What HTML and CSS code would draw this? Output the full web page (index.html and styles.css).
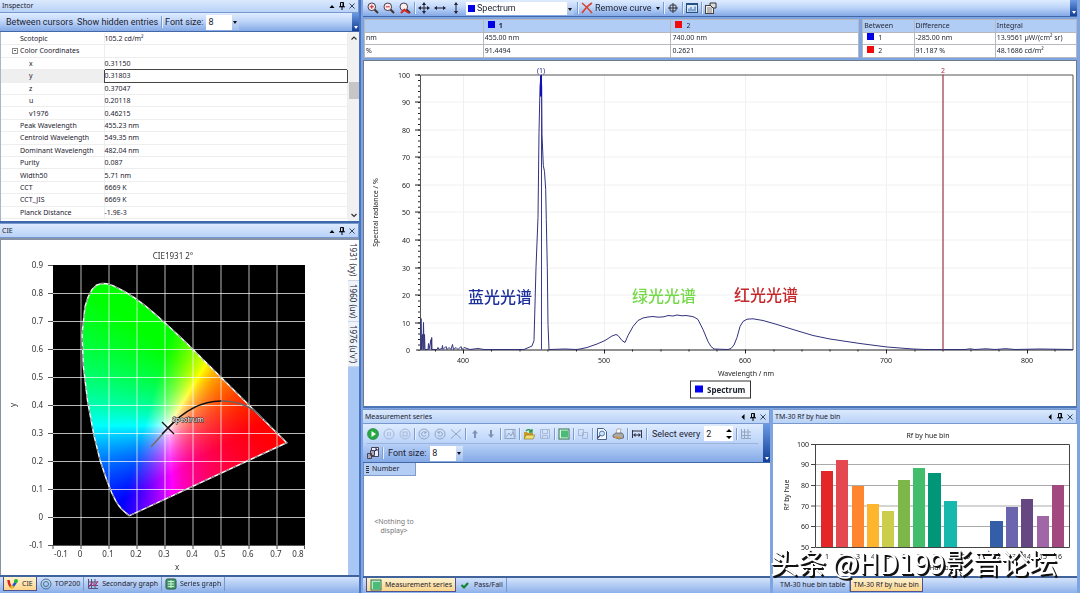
FILE: index.html
```html
<!DOCTYPE html>
<html lang="en">
<head>
<meta charset="utf-8">
<title>Spectrum analysis</title>
<link rel="stylesheet" href="styles.css">
</head>
<body>
<svg class="defs" aria-hidden="true">
  <symbol id="up" viewBox="0 0 10 10"><path d="M2.5 7h5L5 4z"/></symbol>
  <symbol id="left" viewBox="0 0 10 10"><path d="M6.5 2v6L3.5 5z"/></symbol>
  <symbol id="pin" viewBox="0 0 10 10"><path d="M3.5 1.5h3v4h-3zM2 5.800h6M5 6v3M6 1.500v4" fill="none" stroke="#000"/></symbol>
  <symbol id="close" viewBox="0 0 10 10"><path d="M2.500 2.500l5 5M7.500 2.500l-5 5" stroke="#234" stroke-width=".9"/></symbol>
  <symbol id="lens" viewBox="0 0 12 12"><path d="M7 7l4 4" stroke="#432" stroke-width="2"/><circle cx="4.800" cy="4.800" r="3.800" fill="#fbeeee" stroke="#443c4c"/></symbol>
  <symbol id="chartgrid" viewBox="0 0 12 12"><path d="M1.500 1v9.500H11M4.500 1v9M8 1v9M1 4h10M1 7.500h10" fill="none" stroke="currentColor"/></symbol>
</svg>
<div class="app">
  <aside class="side">
    <section class="panel inspector">
      <header class="title"><h2>Inspector</h2>
        <button aria-label="Menu"><svg><use href="#up"/></svg></button><button aria-label="Pin"><svg><use href="#pin"/></svg></button><button aria-label="Close"><svg><use href="#close"/></svg></button>
      </header>
      <div class="toolbar inspector-bar">
        <button>Between cursors</button><button>Show hidden entries</button><i class="sep"></i>
        <label for="fs1">Font size:</label>
        <span class="combo small"><select id="fs1"><option>8</option></select></span>
        <button class="more" aria-label="More"></button>
      </div>
      <div class="props">
        <table>
          <tr><td class="gut"></td><th>Scotopic</th><td>105.2 cd/m²</td></tr>
          <tr class="group"><td class="gut"><button class="fold" aria-label="Collapse"></button></td><th>Color Coordinates</th><td></td></tr>
          <tr class="sub"><td class="gut"></td><th>x</th><td>0.31150</td></tr>
          <tr class="sub picked"><td class="gut"></td><th>y</th><td>0.31803</td></tr>
          <tr class="sub"><td class="gut"></td><th>z</th><td>0.37047</td></tr>
          <tr class="sub"><td class="gut"></td><th>u</th><td>0.20118</td></tr>
          <tr class="sub"><td class="gut"></td><th>v1976</th><td>0.46215</td></tr>
          <tr><td class="gut"></td><th>Peak Wavelength</th><td>455.23 nm</td></tr>
          <tr><td class="gut"></td><th>Centroid Wavelength</th><td>549.35 nm</td></tr>
          <tr><td class="gut"></td><th>Dominant Wavelength</th><td>482.04 nm</td></tr>
          <tr><td class="gut"></td><th>Purity</th><td>0.087</td></tr>
          <tr><td class="gut"></td><th>Width50</th><td>5.71 nm</td></tr>
          <tr><td class="gut"></td><th>CCT</th><td>6669 K</td></tr>
          <tr><td class="gut"></td><th>CCT_JIS</th><td>6669 K</td></tr>
          <tr><td class="gut"></td><th>Planck Distance</th><td>-1.9E-3</td></tr>
        </table>
        <div class="scroll"><svg viewBox="0 0 10 10"><path d="M2.500 6.500L5 4l2.500 2.500"/></svg><i class="thumb"></i><svg viewBox="0 0 10 10"><path d="M2.500 4L5 6.500 7.500 4"/></svg></div>
      </div>
    </section>
    <section class="panel cie">
      <header class="title"><h2>CIE</h2>
        <button aria-label="Menu"><svg><use href="#up"/></svg></button><button aria-label="Pin"><svg><use href="#pin"/></svg></button><button aria-label="Close"><svg><use href="#close"/></svg></button>
      </header>
      <div class="cie-body">
        <svg class="plot" viewBox="0 240 347 335" role="img" aria-label="CIE 1931 chromaticity diagram">
          <rect x="52" y="265" width="252" height="281"/>
          <foreignObject x="52" y="265" width="252" height="280"><canvas id="gamut" width="252" height="280"></canvas></foreignObject>
          <path d="M80 265v280M108 265v280M136 265v280M164 265v280M192 265v280M220 265v280M248 265v280M276 265v280M52 293.500h252M52 321.500h252M52 349.500h252M52 377.500h252M52 405.500h252M52 433.500h252M52 461.500h252M52 489.500h252M52 517.500h252" stroke="#fff" stroke-opacity=".72" fill="none"/>
          <g transform="translate(52 265)"><path id="locus" fill="none" stroke="#fff" stroke-width="1.400"/><path id="locusDash" fill="none" stroke="#555" stroke-width=".8" stroke-dasharray="4 4"/></g>
          <path d="M47 265.500h5M47 293.500h5M47 321.500h5M47 349.500h5M47 377.500h5M47 405.500h5M47 433.500h5M47 461.500h5M47 489.500h5M47 517.500h5M47 545.500h257M52 545v4M80 545v4M108 545v4M136 545v4M164 545v4M192 545v4M220 545v4M248 545v4M276 545v4M303.500 545v4" stroke="#555" fill="none"/>
          <path d="M150 447L167 428" stroke="#776e66" stroke-width="1.500"/>
          <path d="M167 428Q192 401 220 401" stroke="#111" stroke-width="1.500" fill="none"/>
          <path d="M220 401Q247 401 262 419" stroke="#666" stroke-width="1.500" fill="none"/>
          <path d="M161 422l12 12M173 422l-12 12" stroke="#111" stroke-width="1.300"/>
          <text class="halo" x="171" y="422">Spectrum</text>
          <g class="tick end"><text x="42" y="268">0.9</text><text x="42" y="296">0.8</text><text x="42" y="324">0.7</text><text x="42" y="352">0.6</text><text x="42" y="380">0.5</text><text x="42" y="408">0.4</text><text x="42" y="436">0.3</text><text x="42" y="464">0.2</text><text x="42" y="492">0.1</text><text x="42" y="520">0</text><text x="42" y="548">-0.1</text></g>
          <g class="tick mid"><text x="60" y="557">-0.1</text><text x="79" y="557">0</text><text x="107" y="557">0.1</text><text x="135" y="557">0.2</text><text x="163" y="557">0.3</text><text x="191" y="557">0.4</text><text x="219" y="557">0.5</text><text x="247" y="557">0.6</text><text x="275" y="557">0.7</text><text x="297" y="557">0.8</text><text x="176" y="570">x</text><text x="172" y="259">CIE1931 2°</text><text transform="translate(15 405) rotate(-90)">y</text></g>
        </svg>
        <nav class="vtabs"><button class="on">1931 (xy)</button><button>1960 (uv)</button><button>1976 (u'v')</button></nav>
      </div>
    </section>
    <nav class="tabs side-tabs">
      <button class="on"><svg viewBox="0 0 12 12"><path d="M1.500 2Q2 8 5 9.500" stroke="#d22" stroke-width="2.500" fill="none"/><path d="M5 9.500L9 4" stroke="#25c" stroke-width="2.500"/><circle cx="9" cy="3" r="2" fill="#2b3"/><circle cx="5" cy="9" r="1.800" fill="#eb2"/></svg>CIE</button>
      <button><svg viewBox="0 0 12 12" fill="none" stroke="#47708f"><circle cx="6" cy="6" r="5"/><circle cx="6" cy="6" r="2.500"/></svg>TOP200</button>
      <button><svg viewBox="0 0 12 12" color="#557"><use href="#chartgrid"/><path d="M2 9l3-5 3 4 3-5" stroke="#c27" fill="none"/></svg>Secondary graph</button>
      <button><svg viewBox="0 0 12 12"><rect x="1" y="1" width="10" height="10" rx="1.500" fill="#4ca070" stroke="#254"/><path d="M3 3.500h6M3 6h6M3 8.500h6M6 2v8" stroke="#e4ffe8" stroke-width=".8"/></svg>Series graph</button>
    </nav>
  </aside>

  <main class="work">
    <div class="toolbar graph-bar">
      <button aria-label="Zoom in"><svg viewBox="0 0 12 12"><use href="#lens"/><path d="M2.800 4.800h4M4.800 2.800v4" stroke="#c22"/></svg></button>
      <button aria-label="Zoom out"><svg viewBox="0 0 12 12"><use href="#lens"/><path d="M2.800 4.800h4" stroke="#c22"/></svg></button>
      <button aria-label="Reset zoom"><svg viewBox="0 0 12 12"><use href="#lens"/><path d="M2 11l4-4M10 11L5 8" stroke="#d22" stroke-width="1.800"/></svg></button>
      <i class="sep"></i>
      <button aria-label="Pan"><svg viewBox="0 0 12 12"><path d="M6 1v10M1 6h10" stroke="#223"/><path d="M6 0l2 3H4zM6 12l2-3H4zM0 6l3-2v4zM12 6L9 4v4z" fill="#223"/></svg></button>
      <button aria-label="Pan horizontally"><svg viewBox="0 0 12 12"><path d="M1 6h10" stroke="#223"/><path d="M0 6l3-2v4zM12 6L9 4v4z" fill="#223"/></svg></button>
      <button aria-label="Pan vertically"><svg viewBox="0 0 12 12"><path d="M6 1v10" stroke="#223"/><path d="M6 0l2 3H4zM6 12l2-3H4z" fill="#223"/></svg></button>
      <span class="combo curve"><i class="sq blue"></i><select aria-label="Curve"><option>Spectrum</option></select></span>
      <i class="sep"></i>
      <button class="wide"><svg viewBox="0 0 12 12"><path d="M1 1q5 4 10 10M11 1Q6 4 1 11" stroke="#d8432f" stroke-width="1.600" fill="none"/></svg>Remove curve<b class="caret"></b></button>
      <i class="sep"></i>
      <button aria-label="Cursor"><svg viewBox="0 0 12 12" fill="none" stroke="#333"><path d="M6 1v10M1 6h10"/><rect x="3" y="3" width="6" height="6" rx="1"/></svg></button>
      <i class="sep"></i>
      <button aria-label="Graph view"><svg viewBox="0 0 12 12"><rect x=".5" y="1.500" width="11" height="9" fill="#dbe9f7" stroke="#25517c"/><path d="M1 2.500h10" stroke="#25517c"/><path d="M3 9.500V6.500M5 9.500V5M7 9.500V7M9 9.500V4.500" stroke="#2862b0"/></svg></button>
      <i class="sep"></i>
      <button aria-label="Properties"><svg viewBox="0 0 12 12"><rect x=".5" y="3.500" width="8" height="8" fill="#f4f1e7" stroke="#444"/><path d="M2 6h5M2 8h5M2 10h5" stroke="#667" stroke-width=".8"/><path d="M5 1h6v5H8L5 3z" fill="#ddd" stroke="#333"/></svg></button>
      <button class="more" aria-label="More"></button>
    </div>
    <div class="readouts">
      <table class="cursors">
        <tr><th></th><th class="bold"><i class="sq blue"></i>1</th><th><i class="sq red"></i>2</th></tr>
        <tr><td>nm</td><td>455.00 nm</td><td>740.00 nm</td></tr>
        <tr><td>%</td><td>91.4494</td><td>0.2621</td></tr>
      </table>
      <table class="between">
        <tr><th>Between</th><th>Difference</th><th>Integral</th></tr>
        <tr><td><i class="sq blue"></i>1</td><td>-285.00 nm</td><td>13.9561 µW/(cm² sr)</td></tr>
        <tr><td><i class="sq red"></i>2</td><td>91.187 %</td><td>48.1686 cd/m²</td></tr>
      </table>
    </div>
    <section class="graph">
      <svg class="plot" viewBox="364 62 712 344" role="img" aria-label="Spectral radiance graph">
        <path d="M463.500 75v275M604.500 75v275M745.500 75v275M886.500 75v275M1027.500 75v275M421 102.500h652M421 130.500h652M421 157.500h652M421 185.500h652M421 212.500h652M421 240.500h652M421 268.500h652M421 295.500h652M421 323.500h652" stroke="#f0f0f0"/>
        <path d="M420.500 350.500V75.500H1073V350.500" fill="none" stroke="#555"/>
        <path d="M416 350.500h657M415 75.500h5M415 102.500h5M415 130.500h5M415 157.500h5M415 185.500h5M415 212.500h5M415 240.500h5M415 268.500h5M415 295.500h5M415 323.500h5M463.500 350v4M604.500 350v4M745.500 350v4M886.500 350v4M1027.500 350v4M435.500 350v2M491.500 350v2M520 350v2M548 350v2M576.500 350v2M632.500 350v2M661 350v2M689 350v2M717 350v2M774 350v2M802 350v2M830 350v2M858 350v2M915 350v2M943 350v2M971 350v2M999 350v2M1055 350v2" stroke="#222" fill="none"/>
        <path d="M419 75V351" stroke="#222" stroke-width="2" stroke-dasharray="1 4.510"/>
        <path class="curve-line" d="M421 350V319L421.500 350 422.500 335 423 350 423.500 323 424 350 424.500 335 425 350H428L428.500 344 429 350 431 340 431.300 350 431.700 338 432 350H437L438 348 439 350 442 349 442.500 346 443 350 446 347 447 350 449 348 451 350 452.500 345 453.500 350 456 348 458 350 461 347 462 350 464 348 470 350 478 349 484 350H524L532 346.500 534 341 536 268 538 218 539 133 540 87 541 76 541.700 87 542 135 543.300 166 544.500 172 545.700 190 546.300 220 547.300 268 548 325 549 350 565 349.500 576 350 580 349.500 587 348 597 344.500 605 341 612 336.500 616 335 618 336 622 341 625 343 628 336 633 327 638 321 643 318.500 648 317.500 653 317 658 317.700 664 317.300 668 316 673 316.500 677 315.500 682 316.300 686 316 691 316.800 694 317.500 698 320 703 330 708 342 711 347 714 349.500 728 350 731 349 734 345.500 737 338 740 327 743 322 747 319.700 753 319.300 763 321 777 325 793 330 813 336 830 339.500 860 344 887 347.500 913 349.500 925 350H965L970 349.300 975 350 986 349.300 995 350 1006 349.200 1015 350 1040 349.500 1073 350"/>
        <path d="M541.500 75v275" stroke="#3a3a9c"/><path d="M541 76v21" stroke="#1010b8" stroke-width="2"/>
        <path d="M943 75v275" stroke="#a54250" stroke-width="1.300"/>
        <g class="axis end"><text x="410" y="78">100</text><text x="410" y="105">90</text><text x="410" y="133">80</text><text x="410" y="160">70</text><text x="410" y="188">60</text><text x="410" y="215">50</text><text x="410" y="243">40</text><text x="410" y="271">30</text><text x="410" y="298">20</text><text x="410" y="326">10</text><text x="410" y="353">0</text></g>
        <g class="axis mid"><text x="463" y="363">400</text><text x="604" y="363">500</text><text x="745" y="363">600</text><text x="886" y="363">700</text><text x="1027" y="363">800</text><text x="746" y="376">Wavelength / nm</text><text transform="translate(378 213) rotate(-90)">Spectral radiance / %</text><text class="mark1" x="541" y="73">(1)</text><text class="mark2" x="943" y="73">2</text></g>
        <g class="note"><text x="468" y="303">蓝光光谱</text><text x="632" y="302">绿光光谱</text><text x="734" y="301">红光光谱</text></g>
        <rect x="690.500" y="381.500" width="60" height="17" fill="#fff" stroke="#333"/><rect x="695" y="386" width="8" height="7" fill="#00e"/><text class="legend" x="707" y="393">Spectrum</text>
      </svg>
    </section>
    <div class="bottom">
      <section class="panel series">
        <header class="title"><h2>Measurement series</h2>
          <button aria-label="Menu"><svg><use href="#left"/></svg></button><button aria-label="Pin"><svg><use href="#pin"/></svg></button><button aria-label="Close"><svg><use href="#close"/></svg></button>
        </header>
        <div class="toolbar series-bar">
          <div class="row">
            <button aria-label="Start"><svg viewBox="0 0 12 12"><circle cx="6" cy="6" r="5.500" fill="#28a845" stroke="#188032" stroke-width=".6"/><path d="M4.500 3l4.500 3-4.500 3z" fill="#fff"/></svg></button>
            <button class="off" aria-label="Pause"><svg viewBox="0 0 12 12"><circle cx="6" cy="6" r="5"/><path d="M4.800 4v4M7.200 4v4"/></svg></button>
            <button class="off" aria-label="Stop"><svg viewBox="0 0 12 12"><circle cx="6" cy="6" r="5"/><rect x="4" y="4" width="4" height="4"/></svg></button>
            <i class="sep"></i>
            <button class="off dark" aria-label="Repeat"><svg viewBox="0 0 12 12"><circle cx="6" cy="6" r="5"/><path d="M8 5a2.300 2.300 0 1 0 0 2M8 3v2H6"/></svg></button>
            <button class="off dark" aria-label="Replace"><svg viewBox="0 0 12 12"><circle cx="6" cy="6" r="5"/><path d="M4 5a2.300 2.300 0 1 1 0 2M4 3v2h2"/></svg></button>
            <button class="off dark" aria-label="Delete"><svg viewBox="0 0 12 12"><path d="M1 1.500l10 9M11 1.500l-10 9"/></svg></button>
            <i class="sep"></i>
            <button class="off" aria-label="Move up"><svg viewBox="0 0 12 12"><path d="M6 2l3 3.500H7V10H5V5.500H3z" fill="#7d92b5" stroke="none"/></svg></button>
            <button class="off" aria-label="Move down"><svg viewBox="0 0 12 12"><path d="M6 10L3 6.500h2V2h2v4.500h2z" fill="#7d92b5" stroke="none"/></svg></button>
            <i class="sep"></i>
            <button class="off dark" aria-label="Picture"><svg viewBox="0 0 12 12"><rect x="1" y="1.500" width="10" height="9"/><path d="M2 9l3-4 2 3 2-4 1.500 5M8 3h2"/></svg></button>
            <i class="sep"></i>
            <button aria-label="Open"><svg viewBox="0 0 12 12"><path d="M1 4h3l1 1h5v6H1z" fill="#c99b28"/><path d="M3 7h9l-2 4H1z" fill="#f4df72" stroke="#7b681d" stroke-width=".6"/><path d="M3 3q3-3 6 1M9 1v3H6" stroke="#279536" fill="none" stroke-width="1.300"/></svg></button>
            <button class="off" aria-label="Save"><svg viewBox="0 0 12 12"><path d="M1.500 1.500h9v9h-9zM3.500 1.500v4h5v-4M3.500 10.500v-3h5v3"/></svg></button>
            <i class="sep"></i>
            <button aria-label="Series"><svg viewBox="0 0 12 12"><rect x="1" y="1" width="10" height="10" fill="#e1f4e6" stroke="#31724c"/><rect x="3" y="2.500" width="7" height="7" fill="#49bd76"/></svg></button>
            <i class="sep"></i>
            <button class="off" aria-label="Copy"><svg viewBox="0 0 12 12"><path d="M1.500 1.500h5v6h-5zM5.500 4.500h5v6h-5z"/></svg></button>
            <i class="sep"></i>
            <button aria-label="Preview"><svg viewBox="0 0 12 12"><path d="M1.500.5h6l3 3v8h-9z" fill="#f5f9ff" stroke="#46618a"/><circle cx="6" cy="5.500" r="2.500" fill="#cbe4fa" stroke="#4a76b6"/><path d="M4 7.500L1.500 10" stroke="#446" stroke-width="1.500"/></svg></button>
            <button aria-label="Print"><svg viewBox="0 0 12 12"><path d="M4 6l1-5h4L8 6z" fill="#fff" stroke="#888" stroke-width=".6"/><path d="M1 7l3-2h6l1.500 2v3L7 11 1 9z" fill="#aaa" stroke="#555" stroke-width=".7"/><path d="M3 9l5 1" stroke="#d59432" stroke-width="1.500"/></svg></button>
            <i class="sep"></i>
            <button aria-label="Fit width"><svg viewBox="0 0 12 12"><path d="M1.500 2v8M10.500 2v8M1 3h10M3 7h6" stroke="#334" fill="none"/><path d="M4.500 5L2 7l2.500 2zM7.500 5L10 7 7.500 9z" fill="#334"/></svg></button>
            <i class="sep"></i>
            <label class="every" for="every">Select every</label>
            <span class="spin"><input id="every" type="number" value="2"><svg viewBox="0 0 8 16"><path d="M1 6h6L4 3zM1 10h6l-3 3z"/></svg></span>
            <i class="sep"></i>
            <button class="off" aria-label="Grid"><svg viewBox="0 0 12 12" color="#93a5bf"><use href="#chartgrid"/></svg></button>
          </div>
          <div class="row second">
            <button aria-label="Layout"><svg viewBox="0 0 12 12"><path d="M4.500.5h7v9h-7z" fill="#eef" stroke="#445"/><path d="M.5 6.500h4v5h-4zM3.500 3.500h4v5h-4z" fill="#aab" stroke="#445"/><path d="M7 5l3-3M10 2v2M10 2H8" stroke="#225"/></svg></button>
            <i class="sep"></i>
            <label class="every" for="fs2">Font size:</label>
            <span class="combo small"><select id="fs2"><option>8</option></select></span>
          </div>
          <button class="more" aria-label="More"></button>
        </div>
        <div class="series-body">
          <div class="colhead"><i class="grip"></i><span>Number</span></div>
          <p class="empty">&lt;Nothing to display&gt;</p>
        </div>
        <nav class="tabs">
          <button class="on"><svg viewBox="0 0 12 12"><rect x="1" y="1" width="10" height="10" fill="#b9e6c8" stroke="#31724c"/><rect x="3" y="3" width="7" height="7" fill="#49bd76"/></svg>Measurement series</button>
          <button><svg viewBox="0 0 12 12"><path d="M2.500 6l2.500 2.500L9 4" stroke="#16842f" stroke-width="2.200" fill="none"/></svg>Pass/Fail</button>
        </nav>
      </section>
      <section class="panel tm">
        <header class="title"><h2>TM-30 Rf by hue bin</h2>
          <button aria-label="Menu"><svg><use href="#left"/></svg></button><button aria-label="Pin"><svg><use href="#pin"/></svg></button><button aria-label="Close"><svg><use href="#close"/></svg></button>
        </header>
        <div class="tm-body">
          <svg class="plot" viewBox="773 423 304 152" role="img" aria-label="TM-30 Rf by hue bin chart">
            <path d="M815 463.500h254M815 484.500h254M815 505h254M815 525.500h254" stroke="#aaa"/>
            <path d="M811 443.500h258.500V546.500H815.500V443.500M811 463.500h4M811 484.500h4M811 505h4M811 525.500h4M811 546.500h4" fill="none" stroke="#444"/>
            <g class="bars">
              <path d="M821 470h12v76h-12z" fill="#e32627"/><path d="M836 459h12v87h-12z" fill="#e44850"/><path d="M852 485h12v61h-12z" fill="#ff862e"/><path d="M867 503h12v43h-12z" fill="#ffb52d"/><path d="M882 510h12v36h-12z" fill="#cccd4a"/><path d="M898 479h12v67h-12z" fill="#7db74a"/><path d="M913 467h12v79h-12z" fill="#42bd6b"/><path d="M928 472h13v74h-13z" fill="#009678"/><path d="M944 500h13v46h-13z" fill="#16b8ad"/><path d="M990 520h13v26h-13z" fill="#345fa8"/><path d="M1006 506h12v40h-12z" fill="#6a65ac"/><path d="M1021 498h12v48h-12z" fill="#664782"/><path d="M1037 515h12v31h-12z" fill="#a066a5"/><path d="M1052 484h12v62h-12z" fill="#a2497f"/>
            </g>
            <g class="axis end"><text x="809" y="446">100</text><text x="809" y="466">90</text><text x="809" y="487">80</text><text x="809" y="508">70</text><text x="809" y="528">60</text><text x="809" y="549">50</text></g>
            <g class="axis mid"><text x="928" y="437">Rf by hue bin</text><text transform="translate(789 494) rotate(-90)">Rf by hue</text><text x="827" y="558">1</text><text x="842" y="558">2</text><text x="858" y="558">3</text><text x="873" y="558">4</text><text x="888" y="558">5</text><text x="904" y="558">6</text><text x="919" y="558">7</text><text x="935" y="558">8</text><text x="950" y="558">9</text><text x="966" y="558">10</text><text x="981" y="558">11</text><text x="997" y="558">12</text><text x="1012" y="558">13</text><text x="1027" y="558">14</text><text x="1043" y="558">15</text><text x="1058" y="558">16</text><text x="942" y="569">Hue bin</text></g>
          </svg>
        </div>
        <nav class="tabs tm-tabs"><button>TM-30 hue bin table</button><button class="on">TM-30 Rf by hue bin</button></nav>
        <div class="watermark">头条 @HD199影音论坛</div>
      </section>
    </div>
  </main>
</div>
<script src="script.js"></script>
</body>
</html>
```
FILE: styles.css
```css
* { box-sizing: border-box; }
body { margin: 0; font: 7px/10px "Noto Sans", "Noto Sans CJK SC", sans-serif; color: #1c2230; background: #7ea4e2; }
button, input, select { font: inherit; color: inherit; border: 0; background: none; padding: 0; margin: 0; }
h2, p { margin: 0; font: inherit; }
table { border-collapse: collapse; }
th { font-weight: normal; text-align: left; }
svg { display: block; flex: none; }
.defs { position: absolute; width: 0; height: 0; }
.app { display: grid; grid-template-columns: 361fr 719fr; min-height: 100vh; }
.side, .work { display: flex; flex-direction: column; min-width: 0; }
.side { border-right: 2px solid #4773c0; }
.work { padding: 0 3px 0 2px; gap: 1px; }
.panel { display: flex; flex-direction: column; min-width: 0; }

.title { display: flex; align-items: center; height: 15px; padding: 0 1px 0 2px; background: linear-gradient(#dbe9fd, #b9d2f7); border: 1px solid #7698cf; border-left: 0; flex: none; }
.title h2 { flex: 1; }
.title svg { width: 10px; height: 10px; }

.toolbar { position: relative; display: flex; align-items: center; gap: 4px; background: linear-gradient(#dfecff, #bfd6fa 45%, #84a9e6); font: 9px/12px Roboto, sans-serif; border-bottom: 1px solid #4268a8; flex: none; }
.toolbar button { display: flex; align-items: center; white-space: nowrap; }
.toolbar svg { width: 12px; height: 12px; }
.sep { width: 1px; height: 12px; margin: 0 -1px; background: #7c9bcf; box-shadow: 1px 0 #e6f0ff; flex: none; }
.toolbar .more { position: absolute; right: 0; top: 0; bottom: 0; width: 7px; background: linear-gradient(#6b9ae4, #123e94); align-items: flex-end; justify-content: center; padding-bottom: 2px; }
.more::after { content: ""; border: 2px solid transparent; border-top: 3px solid #fff; border-bottom: 0; }
.combo { display: flex; align-items: center; height: 15px; background: #fff; position: relative; }
.combo select { appearance: none; flex: 1; min-width: 0; height: 13px; padding: 0 8px 0 2px; }
.combo::after { content: ""; position: absolute; right: 0; top: 0; bottom: 0; width: 7px; background: linear-gradient(#d8e6fb, #a3c0ee); pointer-events: none; }
.combo::before, .caret { content: ""; border: 2px solid transparent; border-top: 3px solid #111; border-bottom: 0; }
.combo::before { position: absolute; right: 2px; top: 6px; z-index: 1; }
.small { width: 33px; }
.curve { width: 108px; padding-left: 2px; }
.sq { display: inline-block; width: 7px; height: 7px; flex: none; }
.blue { background: #0000e6; }
.red { background: #f00a0a; }

.inspector { height: 223px; border-bottom: 2px solid #3f69ad; }
.inspector .title { height: 13px; border-top: 0; }
.inspector-bar { height: 19px; padding-left: 6px; gap: 4px; }
.inspector-bar .small { margin-left: -1px; }
.props { display: flex; flex: 1; background: #fff; border-left: 1px solid #a9b5c8; min-height: 0; }
.props table { flex: 1; height: 186px; margin-top: 1px; }
.props tr { border-bottom: 1px solid #eee; }
.props td, .props th { padding: 0; line-height: 9px; }
.props td:last-child { border: 1px solid #eee; border-width: 0 1px; }
.gut { width: 19px; }
.props th { width: 84px; }
.sub th { padding-left: 9px; }
.picked { background: #efefef; }
.props .picked td:last-child { border: 1px solid #444; background: #fff; }
.fold { display: block; width: 6px; height: 6px; margin-left: 11px; border: 1px solid #8a8a8a; background: linear-gradient(#555, #555) center / 2px 1px no-repeat; }
.scroll { width: 11px; background: #f1f1f1; display: flex; flex-direction: column; justify-content: space-between; align-items: center; padding: 1px 0; }
.scroll svg { width: 10px; height: 10px; fill: none; stroke: #333; stroke-width: 1.2; }
.thumb { width: 10px; height: 17px; background: #c6c6c6; margin-bottom: 72px; }

.cie { flex: 1; }
.cie-body { display: flex; flex: 1; min-height: 0; background: #fff; border-top: 2px solid #8792a4; border-left: 1px solid #8792a4; }
.plot { width: 100%; height: 100%; }
.cie-body .plot { flex: 1; width: 0; height: auto; }
.vtabs { display: flex; flex-direction: column; width: 11px; background: #a9c7f5; }
.vtabs button { writing-mode: vertical-rl; background: #eef3fa; border-bottom: 1px solid #cdd6e4; padding: 3px 0; font-size: 8px; line-height: 11px; }
.vtabs .on { background: #fff; }
text { fill: currentColor; }
.tick { font-size: 8px; color: #333; }
.axis { font-size: 7px; color: #222; }
.mark1 { fill: #22228c; }
.mark2 { fill: #b82840; }
.end { text-anchor: end; }
.mid { text-anchor: middle; }
.halo { font-size: 7px; fill: #fff; stroke: #222; stroke-width: 1px; paint-order: stroke; }
.note { font: 500 16px "Noto Sans CJK SC", sans-serif; }
.note text:nth-child(1) { fill: #1c2f9c; }
.note text:nth-child(2) { fill: #75d94a; }
.note text:nth-child(3) { fill: #c4282b; }
.legend { font-size: 8px; font-weight: bold; }
.curve-line { fill: none; stroke: #32327e; stroke-width: 1; }

.tabs { display: flex; height: 18px; padding: 0 3px 2px; border-top: 2px solid #41639c; background: linear-gradient(#d3e3fc, #8aaee9); flex: none; }
.tabs button { display: flex; align-items: center; gap: 3px; padding: 0 3px; border-right: 1px solid #7798cf; white-space: nowrap; }
.tabs svg { width: 12px; height: 12px; }
.tabs .on { background: linear-gradient(#fff3d2, #fbd58b); border: 1px solid #51518c; border-top: 0; }
.tm-tabs { padding-left: 4px; }

.graph-bar { height: 17px; padding-left: 4px; margin-bottom: 1px; }
.graph-bar .combo { height: 13px; }
.wide { gap: 2px; }
.caret { margin-left: 3px; }
.readouts { display: flex; gap: 3px; height: 39px; margin-left: 1px; }
.readouts table { border: 1px solid #345d91; background: #fff; table-layout: fixed; height: 39px; }
.readouts th { background: #b2cdf5; }
.readouts td, .readouts th { padding: 0 1px; border: 1px solid #b5b9bd; height: 12px; line-height: 10px; white-space: nowrap; }
.readouts .sq { margin: 0 4px 0 3px; }
.cursors { flex: 495; }
.cursors th:first-child { width: 24%; }
.between { flex: 214; }
.between th:first-child { width: 24%; }
.between th:nth-child(2) { width: 38%; }
.readouts .bold { font-weight: bold; }
.graph { flex: 1; min-height: 0; margin-top: 1px; background: #fff; border: 1px solid #6f7a88; border-bottom: 2px solid #4a74b4; display: flex; }
.graph .plot { height: auto; }

.bottom { flex: none; height: 184px; display: grid; grid-template-columns: 407fr 304fr; gap: 3px; }
.series-bar { display: block; height: 39px; padding-left: 4px; }
.row { display: flex; align-items: center; gap: 4px; height: 19px; }
.second { margin-right: 12px; border-top: 1px solid #9cb4da; }
.every { white-space: nowrap; padding-left: 2px; }
.off svg { fill: none; stroke: #a6b8d3; }
.dark svg { stroke: #91a4c2; }
.spin { display: flex; align-items: center; width: 29px; height: 15px; background: #fff; }
.spin input { width: 21px; padding-left: 2px; appearance: textfield; height: 13px; }
.spin input::-webkit-inner-spin-button { appearance: none; margin: 0; }
.spin svg { width: 8px; height: 16px; }
.series-body { flex: 1; background: #fff; border-left: 1px solid #6f8fbe; }
.colhead { display: flex; align-items: center; gap: 3px; width: 52px; height: 13px; padding-left: 2px; background: #b3cdf5; border: 1px solid #7e9cca; border-width: 0 1px 1px 0; }
.grip { width: 3px; height: 7px; background: repeating-linear-gradient(#333 0 1px, #b3cdf5 1px 2px); }
.empty { width: 60px; padding-top: 41px; text-align: center; line-height: 9px; color: #777; }
.tm { position: relative; }
.tm-body { flex: 1; min-height: 0; background: #fff; display: flex; }
.tm-body .plot { height: auto; }
.watermark { position: absolute; left: -3px; bottom: 14px; font: 28px/36px "Noto Sans CJK SC", sans-serif; color: #fff; text-shadow: 1px 1px 0 #111, 2px 2px 0 #111; white-space: nowrap; pointer-events: none; }
```
FILE: script.js
```js
// Spectral locus of the CIE 1931 2° observer, as x, y pairs.
const locus = [
  [.1741,.005],[.1714,.0051],[.1644,.0109],[.1566,.0177],[.144,.0297],[.1355,.0399],[.1241,.0578],
  [.1096,.0868],[.0913,.1327],[.0687,.2007],[.0454,.295],[.0235,.4127],[.0082,.5384],[.0039,.6548],
  [.0139,.7502],[.025,.785],[.0389,.812],[.055,.828],[.0743,.8338],[.093,.833],[.1142,.8262],
  [.1547,.8059],[.1929,.7816],[.2296,.7543],[.2658,.7243],[.3016,.6923],[.3373,.6589],[.3731,.6245],
  [.4441,.5547],[.5125,.4866],[.5752,.4242],[.627,.3725],[.6658,.334],[.6915,.3083],[.719,.2809],[.7347,.2653]
];
const outline = "M" + locus.map(([x, y]) => `${(28 + x * 280).toFixed(1)} ${(252 - y * 280).toFixed(1)}`).join("L") + "Z";
document.getElementById("locus").setAttribute("d", outline);
document.getElementById("locusDash").setAttribute("d", outline);

const ctx = document.getElementById("gamut").getContext("2d");
const img = ctx.createImageData(252, 280);
for (let py = 0; py < 280; py++) {
  for (let px = 0; px < 252; px++) {
    const x = (px - 28) / 280, y = (252 - py) / 280, z = 1 - x - y;
    const rgb = [
      3.2406 * x - 1.5372 * y - .4986 * z,
      -.9689 * x + 1.8758 * y + .0415 * z,
      .0557 * x - .204 * y + 1.057 * z
    ].map(v => Math.max(v, 0));
    const top = Math.max(...rgb);
    const i = (py * 252 + px) * 4;
    rgb.forEach((v, k) => { img.data[i + k] = 255 * v / top; });
    img.data[i + 3] = 255;
  }
}
ctx.putImageData(img, 0, 0);
ctx.globalCompositeOperation = "destination-in";
ctx.fill(new Path2D(outline));
```
